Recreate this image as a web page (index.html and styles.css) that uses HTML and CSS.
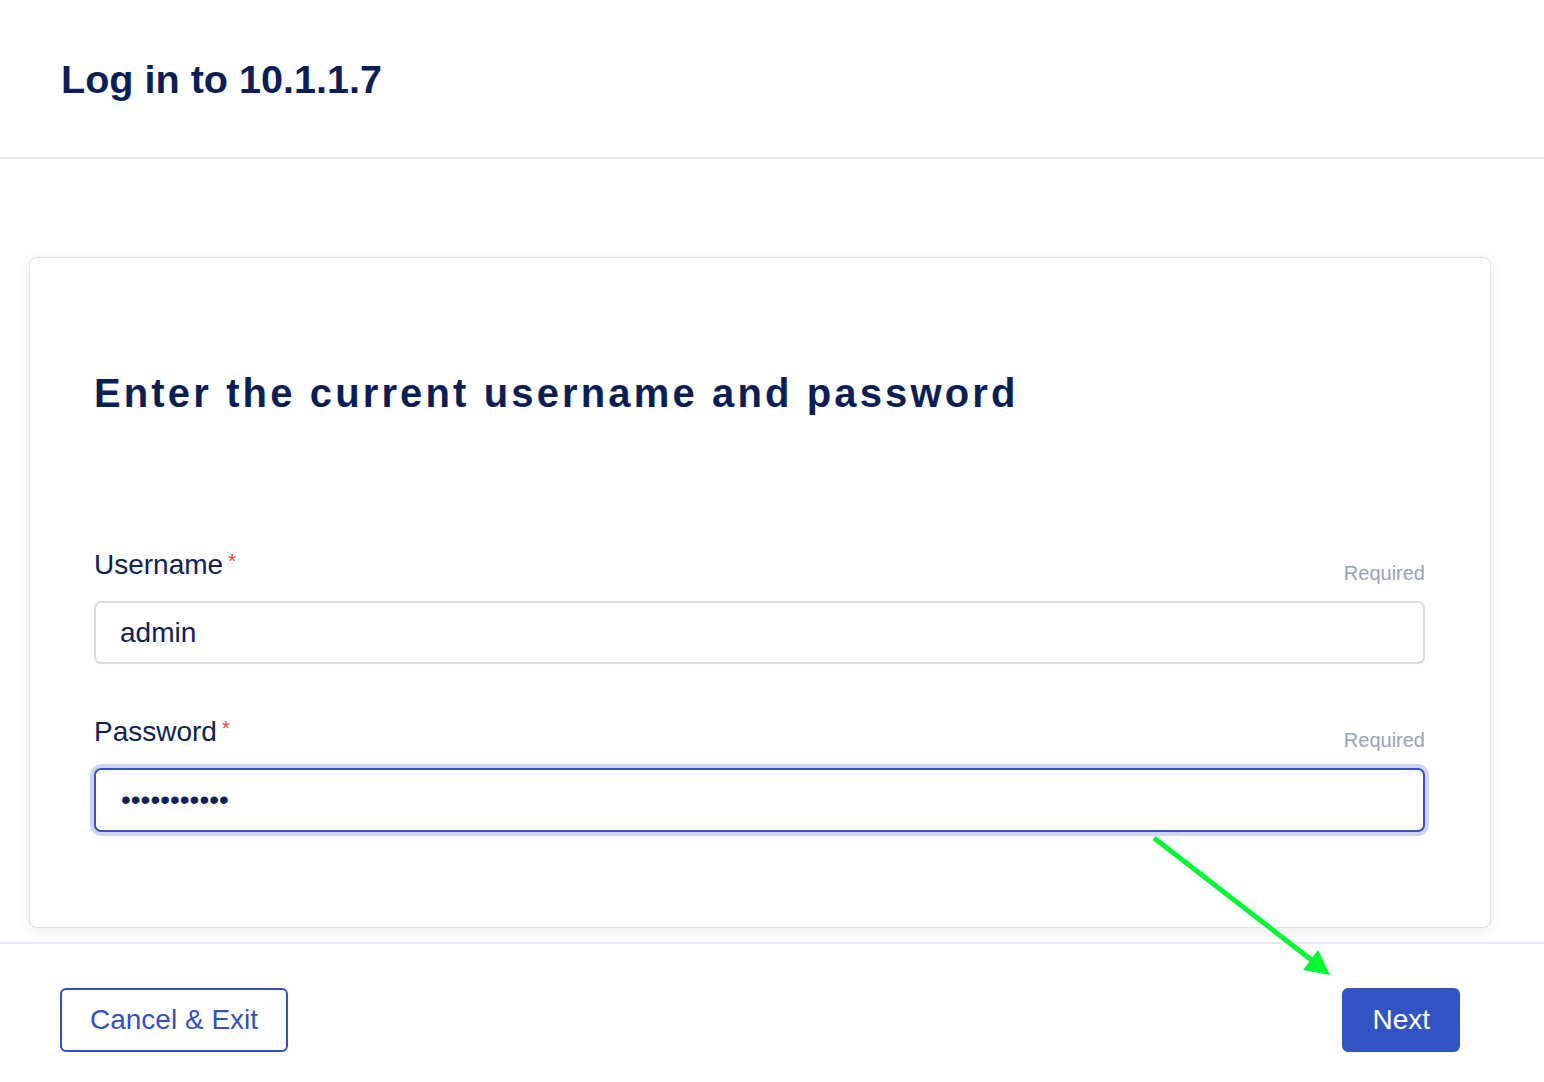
FILE: index.html
```html
<!DOCTYPE html>
<html lang="en">
<head>
<meta charset="utf-8">
<title>Log in to 10.1.1.7</title>
<link rel="stylesheet" href="styles.css">
</head>
<body>
<div class="page">
  <header class="header">
    <h1 class="title">Log in to 10.1.1.7</h1>
  </header>
  <main class="content">
    <section class="card">
      <h2 class="card-title">Enter the current username and password</h2>
      <div class="field">
        <div class="label-row">
          <label class="label" for="username">Username<span class="req">*</span></label>
          <span class="hint">Required</span>
        </div>
        <input class="input" id="username" type="text" value="admin">
      </div>
      <div class="field field-2">
        <div class="label-row">
          <label class="label" for="password">Password<span class="req">*</span></label>
          <span class="hint">Required</span>
        </div>
        <input class="input input-focus" id="password" type="password" value="password123">
      </div>
    </section>
  </main>
  <footer class="footer">
    <button class="btn btn-outline" type="button">Cancel &amp; Exit</button>
    <button class="btn btn-primary" type="button">Next</button>
  </footer>
  <svg class="annotation" width="1544" height="1082" viewBox="0 0 1544 1082" aria-hidden="true">
    <line x1="1154" y1="838" x2="1314" y2="962" stroke="#03f934" stroke-width="5"/>
    <polygon points="1330,975 1318,950 1303,970" fill="#03f934"/>
  </svg>
</div>
</body>
</html>
```
FILE: styles.css
```css
* { box-sizing: border-box; }
html, body { margin: 0; padding: 0; background: #ffffff; }
body {
  font-family: "Liberation Sans", Arial, sans-serif;
  color: #0c2058;
}
.page {
  position: relative;
  width: 1544px;
  height: 1082px;
  overflow: hidden;
  display: flex;
  flex-direction: column;
}
.header {
  height: 159px;
  border-bottom: 2px solid #e7e9f3;
  padding: 55px 0 0 61px;
}
.title {
  margin: 0;
  font-size: 39.6px;
  line-height: 48px;
  font-weight: 700;
  color: #0b1f56;
}
.content {
  height: 785px;
  padding: 98px 53px 0 29px;
  border-bottom: 2px solid #e7e9f3;
}
.card {
  height: 671px;
  border: 1px solid #e0e2ea;
  border-radius: 8px;
  background: #fff;
  box-shadow: 0 2px 12px rgba(30, 40, 80, 0.1);
  padding: 111px 65px 0 64px;
}
.card-title {
  margin: 0 0 128px 0;
  font-size: 40px;
  line-height: 48px;
  font-weight: 700;
  letter-spacing: 3.13px;
  color: #0b1f56;
}
.field { display: flex; flex-direction: column; }
.field-2 { margin-top: 48px; }
.label-row {
  display: flex;
  justify-content: space-between;
  align-items: flex-end;
  margin-bottom: 20px;
}
.label {
  font-size: 28px;
  line-height: 32px;
  color: #0f2257;
}
.req {
  color: #ee4433;
  font-size: 20px;
  margin-left: 5px;
  vertical-align: 6px;
}
.hint {
  font-size: 20px;
  line-height: 16px;
  color: #9aa1b9;
}
.input {
  display: block;
  width: 100%;
  height: 63px;
  border: 2px solid #d9dce4;
  border-radius: 7px;
  padding: 0 24px;
  font-family: "Liberation Sans", Arial, sans-serif;
  font-size: 28px;
  color: #0f2257;
  background: #fff;
  outline: none;
}
.input-focus {
  height: 64px;
  border-color: #3352c3;
  box-shadow: 0 0 0 4px #cfd5f0;
  padding-left: 25px;
}
.footer {
  flex: 1;
  display: flex;
  justify-content: space-between;
  align-items: flex-start;
  padding: 44px 84px 0 60px;
}
.btn {
  height: 64px;
  padding: 0 28px;
  border: 2px solid #3151c2;
  border-radius: 6px;
  font-family: "Liberation Sans", Arial, sans-serif;
  font-size: 28px;
  cursor: pointer;
}
.btn-outline { background: #fff; color: #3151c2; }
.btn-primary { background: #3352c3; border-color: #3352c3; color: #ffffff; }
.annotation {
  position: absolute;
  left: 0;
  top: 0;
  pointer-events: none;
}
```
